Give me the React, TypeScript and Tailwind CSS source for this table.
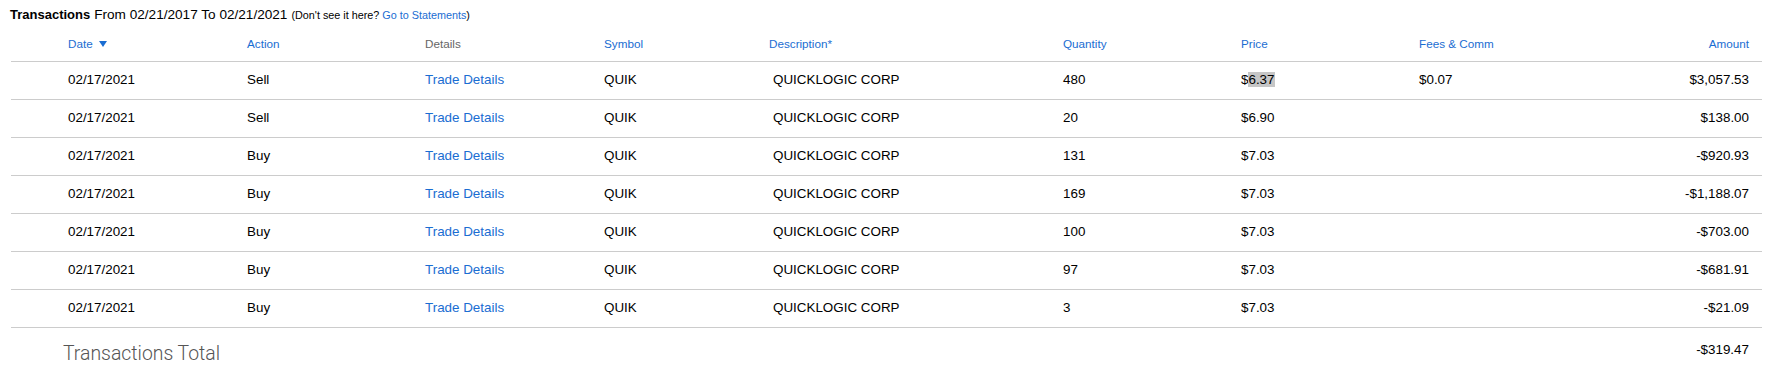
import * as React from "react";

type Row = {
  date: string;
  action: string;
  qty: string;
  price: string;
  fees?: string;
  amount: string;
};

const rows: Row[] = [
  { date: "02/17/2021", action: "Sell", qty: "480", price: "$6.37", fees: "$0.07", amount: "$3,057.53" },
  { date: "02/17/2021", action: "Sell", qty: "20", price: "$6.90", amount: "$138.00" },
  { date: "02/17/2021", action: "Buy", qty: "131", price: "$7.03", amount: "-$920.93" },
  { date: "02/17/2021", action: "Buy", qty: "169", price: "$7.03", amount: "-$1,188.07" },
  { date: "02/17/2021", action: "Buy", qty: "100", price: "$7.03", amount: "-$703.00" },
  { date: "02/17/2021", action: "Buy", qty: "97", price: "$7.03", amount: "-$681.91" },
  { date: "02/17/2021", action: "Buy", qty: "3", price: "$7.03", amount: "-$21.09" },
];

const cols = "grid grid-cols-[57px_179px_178px_179px_165px_294px_178px_178px_178px_1fr]";

function Price({ value, selected }: { value: string; selected?: boolean }) {
  if (!selected) return <span>{value}</span>;
  return (
    <span>
      $<span className="bg-[#c6c6c6]">{value.slice(1)}</span>
    </span>
  );
}

export default function App() {
  return (
    <div className="min-h-[379px] w-[1774px] bg-white pt-[5px] font-['Liberation_Sans',Arial,sans-serif] text-black">
      <div className="flex h-[20px] items-center pl-[10px] leading-[20px]">
        <span className="text-[13px] font-bold">Transactions</span>
        <span className="ml-[4px] text-[13.6px]">From 02/21/2017 To 02/21/2021</span>
        <span className="ml-[4px] text-[10.8px]">
          (Don't see it here? <span className="text-[#1a6dd2]">Go to Statements</span>)
        </span>
      </div>

      <div className="ml-[11px] w-[1751px]">
        <div className={`${cols} h-[37px] items-center border-b border-[#cccccc] pt-[1px] text-[11.7px] text-[#1a6dd2]`}>
          <span />
          <span className="flex items-center gap-[6px]">
            Date
            <svg width="8" height="6" viewBox="0 0 8 6" className="mt-[1px]">
              <path d="M0 0 H8 L4 6 Z" fill="#1a6dd2" />
            </svg>
          </span>
          <span>Action</span>
          <span className="text-[#666666]">Details</span>
          <span>Symbol</span>
          <span>Description*</span>
          <span>Quantity</span>
          <span>Price</span>
          <span>Fees &amp; Comm</span>
          <span className="pr-[13px] text-right">Amount</span>
        </div>

        {rows.map((r, i) => (
          <div key={i} className={`${cols} h-[38px] items-center border-b border-[#cccccc] text-[13.4px]`}>
            <span />
            <span>{r.date}</span>
            <span>{r.action}</span>
            <span className="text-[#1a6dd2]">Trade Details</span>
            <span>QUIK</span>
            <span className="pl-[4px]">QUICKLOGIC CORP</span>
            <span>{r.qty}</span>
            <Price value={r.price} selected={i === 0} />
            <span>{r.fees ?? ""}</span>
            <span className="pr-[13px] text-right">{r.amount}</span>
          </div>
        ))}

        <div className="flex h-[51px] items-start justify-between">
          <span className="ml-[52px] mt-[14px] font-['Roboto',sans-serif] text-[19.4px] font-light leading-[24px] text-[#555555]">
            Transactions Total
          </span>
          <span className="mr-[13px] mt-[12px] text-[13.4px] leading-[20px]">-$319.47</span>
        </div>
      </div>
    </div>
  );
}
